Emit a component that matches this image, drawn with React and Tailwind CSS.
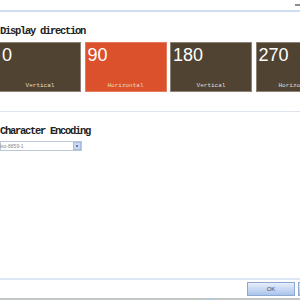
const tiles = [
  { value: "0", label: "Vertical", active: false },
  { value: "90", label: "Horizontal", active: true },
  { value: "180", label: "Vertical", active: false },
  { value: "270", label: "Horizontal", active: false },
];

function Tile({ value, label, active }) {
  return (
    <div
      className={`w-[82px] h-[50px] shrink-0 flex flex-col justify-between border ${
        active ? "bg-[#db512b] border-[#e67a5c]" : "bg-[#504331] border-[#8c8376]"
      }`}
    >
      <div className="pl-[2px] pt-[2.5px] text-[18px] leading-none text-white font-['Liberation_Sans',sans-serif]">
        {value}
      </div>
      <div className="pb-[2.5px] text-center text-[6px] leading-none text-[#e4ddd2] font-['Liberation_Mono',monospace]">
        {label}
      </div>
    </div>
  );
}

export default function App() {
  return (
    <div className="w-[300px] h-[300px] bg-white flex flex-col overflow-hidden">
      <div className="h-[10px] flex justify-end items-start pt-[4px]">
        <div className="w-[5px] h-[2px] bg-[#8c8c8c]" />
      </div>
      <div className="h-[2px] bg-[#cfdcf1]" />

      <h2 className="mt-[13px] h-[12px] leading-[12px] text-[10.5px] font-bold tracking-[-1.3px] text-[#222] font-['Liberation_Mono',monospace]">
        Display direction
      </h2>
      <div className="mt-[5px] ml-[-1px] flex gap-[3.5px]">
        {tiles.map((t) => (
          <Tile key={t.value} {...t} />
        ))}
      </div>

      <div className="mt-[19px] h-[1px] bg-[#dde4ec]" />
      <h2 className="mt-[13px] h-[12px] leading-[12px] text-[10.5px] font-bold tracking-[-1.3px] text-[#222] font-['Liberation_Mono',monospace]">
        Character Encoding
      </h2>
      <div className="mt-[4px] w-[82px] h-[10px] border border-[#bcc8d8] flex items-center justify-between">
        <span className="ml-[-1px] text-[5px] leading-none text-[#8a8a8a] font-['Liberation_Sans',sans-serif]">
          iso-8859-1
        </span>
        <div className="w-[8px] h-[8px] bg-[#c9d7ef] border border-[#a9bde0] flex items-center justify-center">
          <div className="w-[2px] h-[2px] bg-[#5f7fc0]" />
        </div>
      </div>

      <div className="flex-1" />
      <div className="h-[2px] bg-[#dce6f4]" />
      <div className="mt-[2px] flex justify-end gap-[3px]">
        <button className="w-[48px] h-[14px] border border-[#8ea8d4] bg-linear-to-b from-[#e6eefb] to-[#abc4ec] text-[6px] leading-none text-[#4a4a4a] font-['Liberation_Sans',sans-serif]">
          OK
        </button>
        <button className="w-[48px] h-[14px] -mr-[46px] border border-[#8ea8d4] bg-linear-to-b from-[#e6eefb] to-[#abc4ec]" />
      </div>
      <div className="mt-[2px] h-[2px] bg-[#c4c8c4] flex">
        <div className="ml-[206px] w-[7px] bg-[#b4c8dc]" />
      </div>
    </div>
  );
}
